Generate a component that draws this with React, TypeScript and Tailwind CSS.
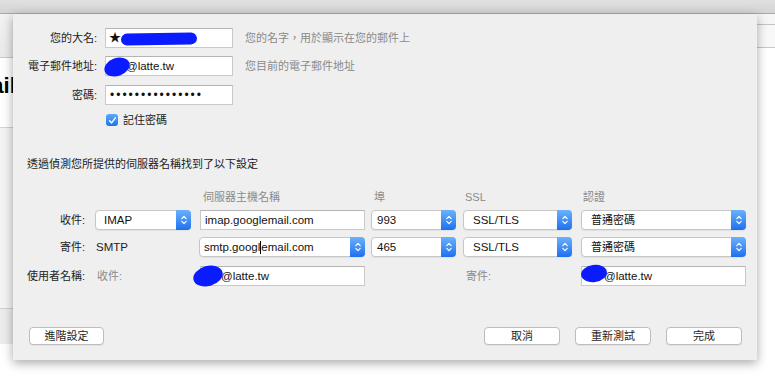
import React from "react";

const FONT = { fontFamily: '"Liberation Sans", "Noto Sans CJK TC", sans-serif' };

function Stepper() {
  return (
    <div className="flex h-[calc(100%+2px)] w-[15px] -my-px -mr-px items-center justify-center rounded-r-[4px] bg-gradient-to-b from-[#6bb1fb] to-[#1c6ff0]">
      <svg width="8" height="12" viewBox="0 0 8 12" fill="none">
        <path d="M1.8 4.6 L4 2.4 L6.2 4.6" stroke="white" strokeWidth="1.2" strokeLinecap="round" strokeLinejoin="round" />
        <path d="M1.8 7.4 L4 9.6 L6.2 7.4" stroke="white" strokeWidth="1.2" strokeLinecap="round" strokeLinejoin="round" />
      </svg>
    </div>
  );
}

function Select({ className, children, pad }: { className: string; children: React.ReactNode; pad: string }) {
  return (
    <div className={`flex h-[20px] items-center rounded-[4px] border border-[#c6c6c6] bg-white shadow-[0_1px_1px_rgba(0,0,0,0.06)] ${className}`}>
      <div className={`flex flex-1 items-center overflow-hidden whitespace-nowrap text-[11.5px] leading-[14px] text-[#111] ${pad}`}>{children}</div>
      <Stepper />
    </div>
  );
}

function Input({ className, children, pad = "pl-[4px]" }: { className: string; children?: React.ReactNode; pad?: string }) {
  return (
    <div className={`relative flex h-[20px] items-center border border-[#c9c9c9] border-t-[#b5b5b5] bg-white text-[11.5px] leading-[14px] text-[#111] whitespace-nowrap ${pad} ${className}`}>
      {children}
    </div>
  );
}

function Button({ className, children }: { className: string; children: React.ReactNode }) {
  return (
    <div className={`flex h-[18px] items-center justify-center rounded-[4px] border border-[#bdbdbd] bg-white text-[11px] leading-[14px] text-[#1e1e1e] shadow-[0_1px_1px_rgba(0,0,0,0.06)] ${className}`}>
      {children}
    </div>
  );
}

export default function App() {
  return (
    <div className="relative h-[376px] w-[775px] overflow-hidden bg-white" style={FONT}>
      {/* background window */}
      <div className="flex h-full flex-col">
        <div className="h-[14px] border-b border-[#a9a9a9] bg-gradient-to-b from-[#e0e0e0] to-[#d4d4d4]" />
        <div className="flex flex-1">
          <div className="flex w-[13px] flex-col overflow-hidden">
            <div className="h-[44px] border-b border-[#c9c9c9] bg-gradient-to-b from-[#f3f3f3] to-[#e9e9e9]" />
            <div className="relative h-[70px] border-b border-[#d2d2d2] bg-white">
              <span className="absolute left-[-27px] top-[11px] text-[22px] font-bold text-black">Mail</span>
            </div>
            <div className="h-[181px] border-b border-[#cfcfcf] bg-[#f4f4f4]" />
            <div className="h-[35px] bg-[#ececec]" />
            <div className="flex-1 bg-white" />
          </div>
          <div className="flex-1" />
          <div className="flex w-[18px] flex-col">
            <div className="h-[11px] border-b border-[#c4c4c4] bg-[#f6f6f6]" />
            <div className="h-[23px] border-b border-[#c9c9c9] bg-[#f8f8f8]" />
            <div className="flex-1 bg-white" />
          </div>
        </div>
      </div>

      {/* sheet */}
      <div className="absolute left-[13px] top-[14px] flex h-[346px] w-[744px] flex-col bg-[#efefef] pl-[14px] pt-[14px] shadow-[0_3px_10px_rgba(0,0,0,0.35)]">
        {/* account form */}
        <div className="flex h-[20px] items-center">
          <div className="w-[70px] text-right text-[11px] leading-[14px] text-[#222]">您的大名:</div>
          <Input className="ml-[8px] w-[128px]" pad="pl-[3px]">
            <span className="text-[12px]">★</span>
            <span className="absolute left-[15px] top-[4px] h-[12px] w-[76px] -rotate-1 rounded-full bg-[#0a1cff]" />
          </Input>
          <div className="ml-[12px] text-[11px] leading-[14px] text-[#8a8a8a]">您的名字，用於顯示在您的郵件上</div>
        </div>
        <div className="mt-[8px] flex h-[20px] items-center">
          <div className="w-[70px] text-right text-[11px] leading-[14px] text-[#222]">電子郵件地址:</div>
          <Input className="ml-[8px] w-[128px]" pad="pl-[20px]">
            <span>@latte.tw</span>
            <span className="absolute left-[-2px] top-[1px] h-[18px] w-[26px] rotate-[-20deg] rounded-[50%] bg-[#0a1cff]" />
          </Input>
          <div className="ml-[12px] text-[11px] leading-[14px] text-[#8a8a8a]">您目前的電子郵件地址</div>
        </div>
        <div className="mt-[9px] flex h-[20px] items-center">
          <div className="w-[70px] text-right text-[11px] leading-[14px] text-[#222]">密碼:</div>
          <Input className="ml-[8px] w-[128px]" pad="pl-[4px]">
            <span className="text-[12px] tracking-[2px]">•••••••••••••••</span>
          </Input>
        </div>
        <div className="mt-[9px] flex h-[12px] items-center">
          <div className="ml-[79px] flex h-[12px] w-[12px] items-center justify-center rounded-[3px] bg-gradient-to-b from-[#5ea8fb] to-[#1b72f0]">
            <svg width="9" height="9" viewBox="0 0 9 9" fill="none">
              <path d="M1.6 4.8 L3.6 6.9 L7.4 1.9" stroke="white" strokeWidth="1.5" strokeLinecap="round" strokeLinejoin="round" />
            </svg>
          </div>
          <div className="ml-[5px] text-[11px] leading-[14px] text-[#222]">記住密碼</div>
        </div>

        <div className="mt-[31px] h-[14px] text-[11px] leading-[14px] text-[#222]">透過偵測您所提供的伺服器名稱找到了以下設定</div>

        {/* server table */}
        <div className="mt-[19px] grid h-[14px] grid-cols-[68px_105px_171px_92px_118px_165px] items-center text-[11px] leading-[14px] text-[#8a8a8a]">
          <div />
          <div />
          <div className="pl-[3px]">伺服器主機名稱</div>
          <div className="pl-[3px]">埠</div>
          <div className="pl-[2px]">SSL</div>
          <div className="pl-[2px]">認證</div>
        </div>
        <div className="mt-[6px] grid h-[20px] grid-cols-[68px_105px_171px_92px_118px_165px] items-center">
          <div className="pr-[10px] text-right text-[11px] leading-[14px] text-[#222]">收件:</div>
          <Select className="w-[96px]" pad="pl-[8px]">IMAP</Select>
          <Input className="w-[165px]">imap.googlemail.com</Input>
          <Select className="w-[85px]" pad="pl-[5px]">993</Select>
          <Select className="w-[109px]" pad="pl-[9px]">SSL/TLS</Select>
          <Select className="w-[165px]" pad="pl-[9px]"><span className="text-[11px]">普通密碼</span></Select>
        </div>
        <div className="mt-[7px] grid h-[20px] grid-cols-[68px_105px_171px_92px_118px_165px] items-center">
          <div className="pr-[10px] text-right text-[11px] leading-[14px] text-[#222]">寄件:</div>
          <div className="pl-[1px] text-[11.5px] leading-[14px] text-[#222]">SMTP</div>
          <Select className="-ml-px w-[166px]" pad="pl-[4px]">
            smtp.googl<span className="inline-block h-[13px] w-px bg-black" />email.com
          </Select>
          <Select className="w-[85px]" pad="pl-[5px]">465</Select>
          <Select className="w-[109px]" pad="pl-[9px]">SSL/TLS</Select>
          <Select className="w-[165px]" pad="pl-[9px]"><span className="text-[11px]">普通密碼</span></Select>
        </div>
        <div className="mt-[9px] grid h-[20px] grid-cols-[68px_105px_171px_92px_118px_165px] items-center">
          <div className="text-[11px] leading-[14px] text-[#222]">使用者名稱:</div>
          <div className="pl-[2px] text-[11px] leading-[14px] text-[#8a8a8a]">收件:</div>
          <Input className="w-[165px]" pad="pl-[20px]">
            <span>@latte.tw</span>
            <span className="absolute left-[-8px] top-[-1px] h-[20px] w-[30px] rotate-[-15deg] rounded-[50%] bg-[#0a1cff]" />
          </Input>
          <div />
          <div className="pl-[3px] text-[11px] leading-[14px] text-[#8a8a8a]">寄件:</div>
          <Input className="w-[165px]" pad="pl-[22px]">
            <span>@latte.tw</span>
            <span className="absolute left-[-1px] top-[-2px] h-[17px] w-[26px] rotate-[-8deg] rounded-[50%] bg-[#0a1cff]" />
          </Input>
        </div>

        {/* buttons */}
        <div className="mt-[41px] flex pr-[15px]">
          <Button className="ml-[2px] w-[75px]">進階設定</Button>
          <div className="ml-auto flex gap-[15px]">
            <Button className="w-[76px]">取消</Button>
            <Button className="w-[76px]">重新測試</Button>
            <Button className="w-[76px]">完成</Button>
          </div>
        </div>
      </div>
    </div>
  );
}
